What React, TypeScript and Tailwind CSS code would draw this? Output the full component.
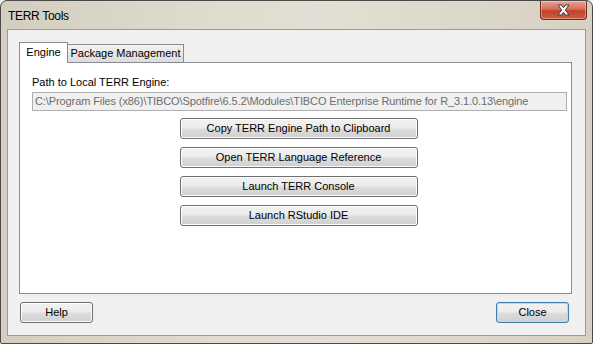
const FONT = "font-['Liberation_Sans',Arial,sans-serif]";

function WinButton({ label, width, primary }: { label: string; width: string; primary?: boolean }) {
    return (
        <button
            className={`${width} h-[21px] rounded-[3px] border ${
                primary
                    ? "border-[#3c7fb1] shadow-[inset_0_0_0_1px_#aee0f8]"
                    : "border-[#707070] shadow-[inset_0_0_0_1px_#fcfcfc]"
            } bg-[linear-gradient(#f2f2f2_0%,#ebebeb_48%,#dddddd_52%,#cfcfcf_100%)] text-[11px] text-black leading-none ${FONT}`}
        >
            {label}
        </button>
    );
}

function CloseX() {
    return (
        <div className="w-[47px] h-[19px] rounded-b-[4px] border border-t-0 border-[#6d2a22] bg-[linear-gradient(#e7a496_0%,#d66d58_45%,#c4412c_55%,#d25a3e_100%)] flex items-center justify-center shadow-[inset_0_0_0_1px_rgba(255,255,255,0.35)]">
            <svg width="15" height="12" viewBox="0 0 15 12">
                <path
                    d="M2 1 H5.5 L7.5 3.8 L9.5 1 H13 L9.3 6 L13 11 H9.5 L7.5 8.2 L5.5 11 H2 L5.7 6 Z"
                    fill="#fff"
                    stroke="#3d3d3d"
                    strokeWidth="1"
                    strokeLinejoin="round"
                />
            </svg>
        </div>
    );
}

export default function App() {
    const actions = [
        "Copy TERR Engine Path to Clipboard",
        "Open TERR Language Reference",
        "Launch TERR Console",
        "Launch RStudio IDE",
    ];

    return (
        <div className="w-[593px] h-[344px] bg-[#f0f0f0]">
            <div className="w-full h-full flex flex-col border border-[#4a4a4a] rounded-t-[7px] rounded-b-[2px] bg-[linear-gradient(90deg,#d3cebf_0%,#dfdbcf_35%,#e3dfd4_55%,#d6d1c3_100%)]">
                {/* title bar */}
                <div className="h-[28px] flex justify-between items-start pl-[7px] pr-[5px]">
                    <span className={`pt-[6px] text-[12px] tracking-[-0.3px] text-black ${FONT}`}>TERR Tools</span>
                    <CloseX />
                </div>

                {/* client area */}
                <div className="flex-1 mx-[6px] mb-[7px] border border-[#9f9b91] bg-[#f0f0f0] flex flex-col">
                    <div className="mt-[11px] ml-[11px] mr-[13px] flex flex-col">
                        <div className={`flex items-end h-[21px] text-[11px] text-black ${FONT}`}>
                            <div className="h-[21px] w-[49px] border border-b-0 border-[#898c95] bg-white flex items-center justify-center relative z-10 -mb-px pb-[1px]">
                                Engine
                            </div>
                            <div className="h-[18px] w-[117px] -ml-px border border-b-0 border-[#898c95] bg-[linear-gradient(#f2f2f2,#dcdcdc)] flex items-center justify-center">
                                Package Management
                            </div>
                        </div>
                        <div className={`h-[232px] border border-[#898c95] bg-white pl-[12px] pr-[4px] pt-[14px] flex flex-col ${FONT}`}>
                            <span className="text-[11px] text-black leading-none">Path to Local TERR Engine:</span>
                            <div className="mt-[4px] h-[19px] border border-[#aeaeae] bg-[#f0f0f0] flex items-center px-[2px] text-[11px] text-[#6d6d6d] tracking-[-0.1px] whitespace-nowrap overflow-hidden">
                                C:\Program Files (x86)\TIBCO\Spotfire\6.5.2\Modules\TIBCO Enterprise Runtime for R_3.1.0.13\engine
                            </div>
                            <div className="mt-[7px] flex flex-col items-center gap-[8px] pr-[2px]">
                                {actions.map((a) => (
                                    <WinButton key={a} label={a} width="w-[238px]" />
                                ))}
                            </div>
                        </div>
                    </div>

                    <div className="mt-auto mb-[12px] ml-[12px] mr-[16px] flex justify-between">
                        <WinButton label="Help" width="w-[73px]" />
                        <WinButton label="Close" width="w-[73px]" primary />
                    </div>
                </div>
            </div>
        </div>
    );
}
